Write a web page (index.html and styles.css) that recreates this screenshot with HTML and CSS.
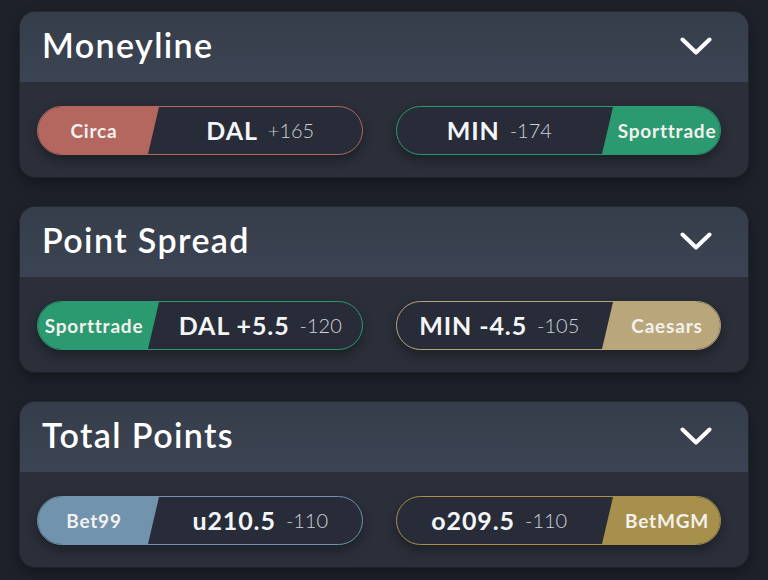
FILE: index.html
```html
<!DOCTYPE html>
<html>
<head>
<meta charset="utf-8">
<link rel="stylesheet" href="styles.css">
</head>
<body>
<div class="page">
  <section class="card">
    <div class="card-head">
      <h2 class="title">Moneyline</h2>
      <svg class="chev" viewBox="0 0 32 18" width="32" height="18"><path d="M2.5 2.5 L16 15.5 L29.5 2.5" fill="none" stroke="#fff" stroke-width="4" stroke-linecap="round" stroke-linejoin="round"/></svg>
    </div>
    <div class="card-body">
      <div class="pill circa">
        <span class="book book-left">Circa</span>
        <span class="line"><b class="team">DAL</b><span class="odds">+165</span></span>
      </div>
      <div class="pill sporttrade">
        <span class="line"><b class="team">MIN</b><span class="odds">-174</span></span>
        <span class="book book-right">Sporttrade</span>
      </div>
    </div>
  </section>

  <section class="card">
    <div class="card-head">
      <h2 class="title">Point Spread</h2>
      <svg class="chev" viewBox="0 0 32 18" width="32" height="18"><path d="M2.5 2.5 L16 15.5 L29.5 2.5" fill="none" stroke="#fff" stroke-width="4" stroke-linecap="round" stroke-linejoin="round"/></svg>
    </div>
    <div class="card-body">
      <div class="pill sporttrade">
        <span class="book book-left">Sporttrade</span>
        <span class="line"><b class="team">DAL +5.5</b><span class="odds">-120</span></span>
      </div>
      <div class="pill caesars">
        <span class="line"><b class="team">MIN -4.5</b><span class="odds">-105</span></span>
        <span class="book book-right">Caesars</span>
      </div>
    </div>
  </section>

  <section class="card">
    <div class="card-head">
      <h2 class="title">Total Points</h2>
      <svg class="chev" viewBox="0 0 32 18" width="32" height="18"><path d="M2.5 2.5 L16 15.5 L29.5 2.5" fill="none" stroke="#fff" stroke-width="4" stroke-linecap="round" stroke-linejoin="round"/></svg>
    </div>
    <div class="card-body">
      <div class="pill bet99">
        <span class="book book-left">Bet99</span>
        <span class="line"><b class="team">u210.5</b><span class="odds">-110</span></span>
      </div>
      <div class="pill betmgm">
        <span class="line"><b class="team">o209.5</b><span class="odds">-110</span></span>
        <span class="book book-right">BetMGM</span>
      </div>
    </div>
  </section>
</div>
</body>
</html>
```

FILE: styles.css
```css
* { box-sizing: border-box; }

html, body {
  margin: 0;
  padding: 0;
  background: #1d212a;
}

body {
  font-family: "Lato", "Open Sans", sans-serif;
  color: #fff;
  width: 768px;
  height: 580px;
  overflow: hidden;
}

.page {
  display: flex;
  flex-direction: column;
  gap: 30px;
  padding: 12px 20px 0 20px;
}

.card {
  width: 728px;
  height: 165px;
  border-radius: 15px;
  overflow: hidden;
  background: #2b303b;
  box-shadow: 0 0 0 1px rgba(255, 255, 255, 0.05), 0 6px 14px rgba(0, 0, 0, 0.35);
  display: flex;
  flex-direction: column;
}

.card-head {
  height: 70px;
  flex: none;
  display: flex;
  align-items: center;
  justify-content: space-between;
  padding: 0 36px 0 22px;
  background: linear-gradient(180deg, #363d4a 0%, #3c4352 100%);
}

.title {
  margin: 0;
  font-size: 34px;
  font-weight: 600;
  letter-spacing: 1.4px;
  color: #fff;
  margin-top: -6px;
}

.chev {
  display: block;
  margin-top: -3px;
}

.card-body {
  flex: 1;
  display: flex;
  align-items: center;
  gap: 33px;
  padding: 2px 27px 0 17px;
  background: #2a2f3a;
}

.pill {
  flex: 1;
  height: 49px;
  border-radius: 25px;
  border: 1.5px solid var(--c);
  background: #272c38;
  overflow: hidden;
  display: flex;
  align-items: stretch;
  box-shadow: 0 5px 12px rgba(0, 0, 0, 0.35);
}

.circa { --c: #b4675f; }
.sporttrade { --c: #2b9a70; }
.caesars { --c: #b9a67b; }
.bet99 { --c: #7193ad; }
.betmgm { --c: #a78f4c; }

.book {
  flex: none;
  background: var(--c);
  display: flex;
  align-items: center;
  justify-content: center;
  font-size: 19px;
  font-weight: 700;
  color: #f3f1ee;
  letter-spacing: 0.8px;
  white-space: nowrap;
}

.book-left {
  width: 121px;
  padding-right: 9px;
  clip-path: polygon(0 0, 100% 0, calc(100% - 11px) 100%, 0 100%);
}

.book-right {
  width: 118px;
  padding-left: 12px;
  clip-path: polygon(11px 0, 100% 0, 100% 100%, 0 100%);
}

.line {
  flex: 1;
  display: flex;
  align-items: center;
  justify-content: center;
  gap: 10px;
  padding-bottom: 2px;
}

.team {
  font-size: 25px;
  font-weight: 700;
  letter-spacing: 0.9px;
  color: #f4f5f7;
}

.odds {
  font-size: 20px;
  font-weight: 300;
  color: #cdd1d9;
}
```
